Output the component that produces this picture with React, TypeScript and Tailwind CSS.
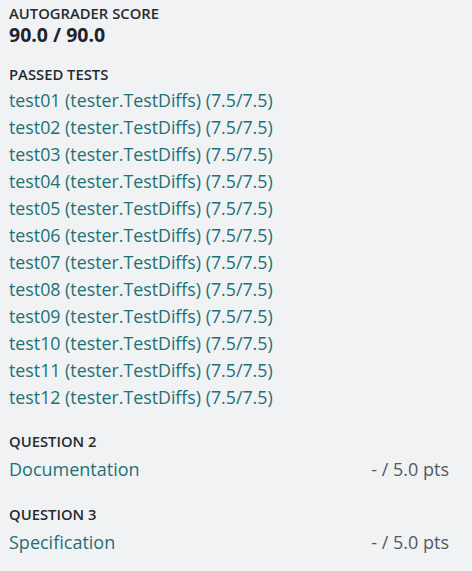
const tests = Array.from({ length: 12 }, (_, i) => `test${String(i + 1).padStart(2, "0")}`);

function Label({ children }: { children: React.ReactNode }) {
    return <div className="text-[14.8px] font-semibold leading-[20px] text-[#262b30] uppercase">{children}</div>;
}

function QuestionRow({ title, name, className }: { title: string; name: string; className: string }) {
    return (
        <div className={className}>
            <Label>{title}</Label>
            <div className="flex items-center justify-between pr-[14px] text-[18px] leading-[27px] mt-[5px]">
                <span className="text-[#1d7175]">{name}</span>
                <span className="text-[#525961]">- / 5.0 pts</span>
            </div>
        </div>
    );
}

export default function App() {
    return (
        <div className="min-h-[571px] w-[472px] bg-[#f1f2f4] px-[9px] pt-[3px] font-['Open_Sans',sans-serif]">
            <Label>Autograder Score</Label>
            <div className="text-[19.5px] font-bold leading-[24px] text-[#1e2329]">90.0 / 90.0</div>

            <div className="mt-[17px]">
                <Label>Passed Tests</Label>
                <ul className="mt-[3px]">
                    {tests.map((t) => (
                        <li key={t} className="text-[17.8px] leading-[27px] text-[#1d7175]">
                            {t} (tester.TestDiffs) (7.5/7.5)
                        </li>
                    ))}
                </ul>
            </div>

            <QuestionRow className="mt-[20px]" title="Question 2" name="Documentation" />
            <QuestionRow className="mt-[21px]" title="Question 3" name="Specification" />
        </div>
    );
}
